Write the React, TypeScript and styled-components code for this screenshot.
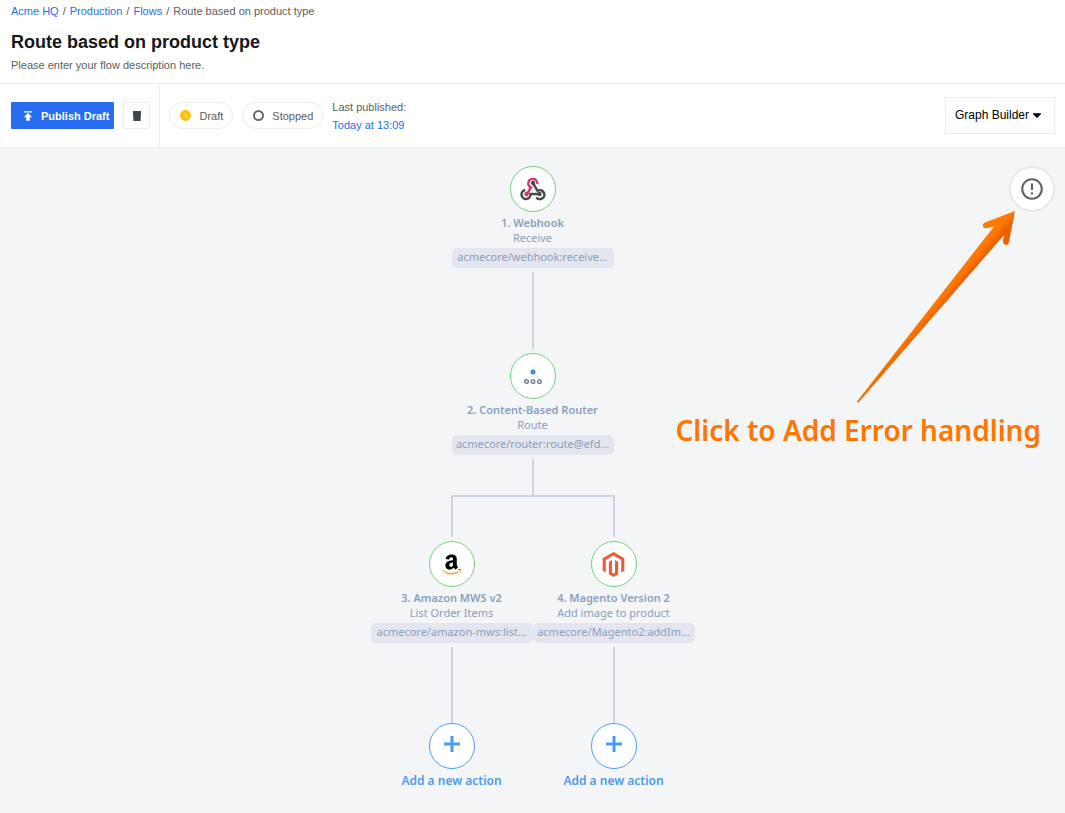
import React from 'react';
import styled, { createGlobalStyle } from 'styled-components';
import { FaAmazon, FaCaretDown, FaMagento } from 'react-icons/fa';
import { MdErrorOutline, MdPublish, MdWatchLater } from 'react-icons/md';

const GlobalStyle = createGlobalStyle`
  * { box-sizing: border-box; }
  body {
    margin: 0;
    background: #f3f5f7;
    color: #5c5c5c;
    font: 11px/18px "Liberation Sans", Arial, sans-serif;
  }
  button { font: inherit; cursor: pointer; }
  a { color: #266df0; text-decoration: none; }
`;

const Page = styled.div`
  display: flex;
  flex-direction: column;
  min-height: 100vh;
`;

const Header = styled.header`
  padding: 2px 11px 9px;
  background: #fff;
  border-bottom: 1px solid #ebecee;
`;

const Crumbs = styled.nav`
  display: flex;
  gap: 4px;
`;

const FlowTitle = styled.h1`
  margin: 10px 0 2px;
  color: #15171c;
  font-size: 18px;
  line-height: 24px;
`;

const Description = styled.p`
  margin: 0;
`;

const Toolbar = styled.div`
  display: flex;
  align-items: stretch;
  height: 64px;
  background: #fff;
  border-bottom: 1px solid #ebecee;
`;

const ToolGroup = styled.div<{ $divided?: boolean }>`
  display: flex;
  align-items: center;
  gap: 9px;
  padding: 0 9px 0 ${(p) => (p.$divided ? 11 : 9)}px;
  border-right: ${(p) => (p.$divided ? '1px solid #ebecee' : '0')};
`;

const PublishButton = styled.button`
  display: flex;
  align-items: center;
  gap: 6px;
  height: 27px;
  padding: 0 5px 0 10px;
  color: #fff;
  background: #266df0;
  border: 0;
  border-radius: 1px;
  && { font-weight: 700; }
`;

const IconButton = styled.button`
  display: grid;
  place-items: center;
  width: 27px;
  height: 27px;
  padding: 0;
  background: #fff;
  border: 1px solid #ebecee;
  border-radius: 2px;
`;

const Pill = styled.span`
  display: flex;
  align-items: center;
  gap: 7px;
  height: 27px;
  padding: 0 9px;
  border: 1px solid #ebecee;
  border-radius: 14px;
`;

const Published = styled.div`
  display: flex;
  flex-direction: column;
`;

const BuilderButton = styled.button`
  display: flex;
  align-items: center;
  gap: 1px;
  align-self: center;
  height: 37px;
  margin: 0 10px 0 auto;
  padding: 0 10px 2px 9px;
  color: #000;
  background: #fff;
  border: 1px solid #ebecee;
  && { font-size: 12px; }
`;

const Canvas = styled.main`
  position: relative;
  flex: 1;
  display: flex;
  flex-direction: column;
  align-items: center;
  padding: 18px 0 20px;
  font-family: "Noto Sans", sans-serif;
  color: #8a9fbc;
`;

const NodeBox = styled.section`
  display: flex;
  flex-direction: column;
  align-items: center;
  width: 162px;
`;

const Circle = styled.div`
  display: grid;
  place-items: center;
  width: 46px;
  height: 46px;
  margin-bottom: 3px;
  background: #fff;
  border: 1px solid #76cf7a;
  border-radius: 50%;
`;

const NodeTitle = styled.h2`
  margin: 0;
  font-size: 11px;
  font-weight: 600;
  line-height: 15px;
  white-space: nowrap;
`;

const NodeAction = styled.p`
  margin: 0 0 3px;
  line-height: 15px;
`;

const Tag = styled.span`
  width: 100%;
  height: 20px;
  line-height: 18px;
  text-align: center;
  white-space: nowrap;
  background: #e3e6ee;
  border-radius: 5px;
`;

const Line = styled.div<{ $length: number; $top?: number; $bottom?: number }>`
  width: 2px;
  height: ${(p) => p.$length}px;
  margin: ${(p) => p.$top ?? 0}px 0 ${(p) => p.$bottom ?? 0}px;
  background: #cdd4e1;
`;

const Rail = styled.div`
  width: 164px;
  height: 2px;
  background: #cdd4e1;
`;

const Branches = styled.div`
  display: flex;
`;

const Branch = styled.div`
  display: flex;
  flex-direction: column;
  align-items: center;
`;

const AddButton = styled.button`
  display: flex;
  flex-direction: column;
  align-items: center;
  width: 162px;
  padding: 0;
  color: #4a9bf0;
  background: none;
  border: 0;
  && { font-size: 12px; font-weight: 600; }

  ${Circle} { border-color: #4a9bf0; }
`;

const ErrorButton = styled.button`
  position: absolute;
  top: 18px;
  right: 10px;
  display: grid;
  place-items: center;
  width: 46px;
  height: 46px;
  padding: 0;
  color: #5f6368;
  background: #fff;
  border: 2px solid #e6e8eb;
  border-radius: 50%;
`;

const Callout = styled.aside`
  position: absolute;
  top: 63px;
  right: 24px;
  display: flex;
  flex-direction: column;
  align-items: flex-end;
  color: #ff7500;
  font-size: 28px;
  font-weight: 600;
  line-height: 40px;
  white-space: nowrap;

  svg { margin: 0 24px 6px 0; }
`;

const TrashIcon = () => (
  <svg width="10" height="12" viewBox="0 0 10 12" fill="#40464d" aria-hidden="true">
    <path d="M1 1h8v2H1zM1 2.800h8L8.600 11H1.400z" />
  </svg>
);

const WebhookIcon = () => (
  <svg width="26" height="24" viewBox="0 0 26 24" fill="none" strokeWidth="2.500" aria-hidden="true">
    <path d="M7 17l4-6.500A4.500 4.500 0 1 1 17.300 7" stroke="#d13c6b" />
    <path d="M13 6l4.500 7.800A4.500 4.500 0 1 1 16.300 20.500" stroke="#4a4a4a" />
    <path d="M19 17h-8.500A4.500 4.500 0 1 1 5.300 13" stroke="#4a4a4a" />
    <circle cx="13" cy="6" r="2.200" fill="#4a4a4a" />
    <circle cx="6.500" cy="17" r="2.200" fill="#d13c6b" />
    <circle cx="19.500" cy="17" r="2.200" fill="#4a4a4a" />
  </svg>
);

const RouterIcon = () => (
  <svg width="20" height="20" viewBox="0 0 20 20" aria-hidden="true">
    <path d="M10 1v5l6 7" fill="none" stroke="#d5dae0" />
    <circle cx="10" cy="6" r="2.500" fill="#3f8fd0" />
    {[3.5, 10, 16.5].map((x) => (
      <circle key={x} cx={x} cy="15.500" r="1.900" fill="#dfe5ea" stroke="#71808f" strokeWidth="1.300" />
    ))}
  </svg>
);

const AmazonIcon = () => (
  <>
    <svg width="0" height="0" style={{ position: 'absolute' }} aria-hidden="true">
      <linearGradient id="amazon" x1="0" y1="0" x2="0" y2="1">
        <stop offset="0.755" stopColor="#000" />
        <stop offset="0.755" stopColor="#f7a541" />
      </linearGradient>
    </svg>
    <FaAmazon size={23} fill="url(#amazon)" />
  </>
);

const PlusIcon = () => (
  <svg width="16" height="20" viewBox="0 0 16 20" stroke="#4a9bf0" strokeWidth="3" aria-hidden="true">
    <path d="M8 0v16M0 8h16" />
  </svg>
);

const ArrowDrawing = () => (
  <svg width="160" height="193" viewBox="0 0 160 193" aria-hidden="true">
    <defs>
      <linearGradient id="arrow" gradientUnits="userSpaceOnUse" x1="72" y1="92" x2="84" y2="102">
        <stop offset="0.35" stopColor="#ff7900" />
        <stop offset="0.75" stopColor="#ec6200" />
      </linearGradient>
    </defs>
    <path
      fill="url(#arrow)"
      d="M158 0L128 11.500C124 13.500 126 18 130 17L137 15.500L0 190.500Q0 192 1.500 191.500L147 24L146 30C145.500 35 151.500 35 152 31Z"
    />
  </svg>
);

type NodeProps = { icon: React.ReactNode; title: string; action: string; tag: string };

const FlowNode = ({ icon, title, action, tag }: NodeProps) => (
  <NodeBox>
    <Circle>{icon}</Circle>
    <NodeTitle>{title}</NodeTitle>
    <NodeAction>{action}</NodeAction>
    <Tag>{tag}</Tag>
  </NodeBox>
);

const branches: NodeProps[] = [
  { icon: <AmazonIcon />, title: '3. Amazon MWS v2', action: 'List Order Items', tag: 'acmecore/amazon-mws:list…' },
  { icon: <FaMagento size={25} color="#f05a35" />, title: '4. Magento Version 2', action: 'Add image to product', tag: 'acmecore/Magento2:addIm…' },
];

export default function App() {
  return (
    <Page>
      <GlobalStyle />
      <Header>
        <Crumbs aria-label="Breadcrumb">
          <a href="#hq">Acme HQ</a>
          <span>/</span>
          <a href="#production">Production</a>
          <span>/</span>
          <a href="#flows">Flows</a>
          <span>/</span>
          <span>Route based on product type</span>
        </Crumbs>
        <FlowTitle>Route based on product type</FlowTitle>
        <Description>Please enter your flow description here.</Description>
      </Header>
      <Toolbar>
        <ToolGroup $divided>
          <PublishButton><MdPublish size={14} />Publish Draft</PublishButton>
          <IconButton aria-label="Delete"><TrashIcon /></IconButton>
        </ToolGroup>
        <ToolGroup>
          <Pill><MdWatchLater size={13} color="#ffc107" />Draft</Pill>
          <Pill>
            <svg width="13" height="13" viewBox="0 0 13 13" aria-hidden="true">
              <circle cx="6.500" cy="6.500" r="4.500" fill="none" stroke="#666b70" strokeWidth="2" />
            </svg>
            Stopped
          </Pill>
          <Published>
            <span>Last published:</span>
            <a href="#versions">Today at 13:09</a>
          </Published>
        </ToolGroup>
        <BuilderButton>Graph Builder<FaCaretDown size={14} /></BuilderButton>
      </Toolbar>
      <Canvas>
        <FlowNode icon={<WebhookIcon />} title="1. Webhook" action="Receive" tag="acmecore/webhook:receive…" />
        <Line $top={4} $length={77} $bottom={4} />
        <FlowNode icon={<RouterIcon />} title="2. Content-Based Router" action="Route" tag="acmecore/router:route@efd…" />
        <Line $top={4} $length={36} />
        <Rail />
        <Branches>
          {branches.map((node) => (
            <Branch key={node.title}>
              <Line $length={40} $bottom={4} />
              <FlowNode {...node} />
              <Line $top={4} $length={76} />
              <AddButton>
                <Circle><PlusIcon /></Circle>
                Add a new action
              </AddButton>
            </Branch>
          ))}
        </Branches>
        <ErrorButton aria-label="Add error handling"><MdErrorOutline size={26} /></ErrorButton>
        <Callout>
          <ArrowDrawing />
          Click to Add Error handling
        </Callout>
      </Canvas>
    </Page>
  );
}
